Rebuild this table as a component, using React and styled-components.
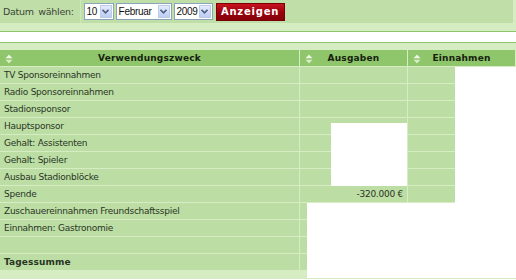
import React from 'react';
import styled, { createGlobalStyle } from 'styled-components';

const rows = [
  { label: 'TV Sponsoreinnahmen' },
  { label: 'Radio Sponsoreinnahmen' },
  { label: 'Stadionsponsor' },
  { label: 'Hauptsponsor' },
  { label: 'Gehalt: Assistenten' },
  { label: 'Gehalt: Spieler' },
  { label: 'Ausbau Stadionblöcke' },
  { label: 'Spende', out: '-320.000 €' },
  { label: 'Zuschauereinnahmen Freundschaftsspiel' },
  { label: 'Einnahmen: Gastronomie' },
  { label: '' },
  { label: 'Tagessumme', bold: true },
];

const blanks = [
  { left: 455, top: 17, width: 61, height: 211 },
  { left: 331, top: 73, width: 76, height: 63 },
  { left: 307, top: 153, width: 209, height: 75 },
];

function SortIcon() {
  return (
    <svg width="8" height="10" viewBox="0 0 8 10">
      <path d="M0.5 4.2 L4 0.6 L7.5 4.2 Z" fill="#eef7e6" />
      <path d="M0.5 5.8 L4 9.4 L7.5 5.8 Z" fill="#d8ecc8" />
    </svg>
  );
}

function Arrow() {
  return (
    <ArrowBox>
      <svg width="7" height="5" viewBox="0 0 7 5">
        <path d="M0.5 0.8 L3.5 3.8 L6.5 0.8" fill="none" stroke="#4d6185" strokeWidth="1.6" />
      </svg>
    </ArrowBox>
  );
}

function Select({ value, width }) {
  return (
    <SelectBox $width={width}>
      <SelectText>{value}</SelectText>
      <Arrow />
    </SelectBox>
  );
}

export default function App() {
  return (
    <Page>
      <GlobalStyle />
      <FilterBar>
        <Label>Datum wählen:</Label>
        <Controls>
          <Select value="10" width={30} />
          <Select value="Februar" width={56} />
          <Select value="2009" width={39} />
          <ShowButton>Anzeigen</ShowButton>
        </Controls>
      </FilterBar>
      <Band $h={8} />
      <WhiteStrip />
      <Band $h={7} />
      <TableWrap>
        <Table>
          <HeadCell>
            <SortIcon />
            <span>Verwendungszweck</span>
          </HeadCell>
          <HeadCell>
            <SortIcon />
            <span>Ausgaben</span>
          </HeadCell>
          <HeadCell>
            <SortIcon />
            <span>Einnahmen</span>
          </HeadCell>
          {rows.map((r, i) => (
            <React.Fragment key={i}>
              <Cell $bold={r.bold}>{r.label}</Cell>
              <Cell $right>{r.out || ''}</Cell>
              <Cell />
            </React.Fragment>
          ))}
        </Table>
        {blanks.map((b, i) => (
          <Blank key={i} $left={b.left} $top={b.top} $width={b.width} $height={b.height} />
        ))}
      </TableWrap>
    </Page>
  );
}

const GlobalStyle = createGlobalStyle`
  body {
    margin: 0;
    background: #fff;
    font-family: "DejaVu Sans", Verdana, sans-serif;
  }
`;

const Page = styled.div`
  width: 516px;
  background: #d6edc4;
`;

const FilterBar = styled.div`
  display: flex;
  align-items: center;
  width: 513px;
  height: 23px;
  background: #c0dfa8;
`;

const Label = styled.div`
  display: flex;
  align-items: center;
  height: 100%;
  padding: 0 6px 0 3px;
  border-right: 1px solid #d0e8bd;
  font-size: 9.5px;
  letter-spacing: -0.3px;
  word-spacing: 2px;
  color: #3d4438;
`;

const Controls = styled.div`
  display: flex;
  align-items: center;
  gap: 2px;
  margin-left: 3px;
`;

const SelectBox = styled.div`
  display: flex;
  align-items: stretch;
  box-sizing: border-box;
  width: ${(p) => p.$width}px;
  height: 17px;
  border: 1px solid #8aa4b8;
  background: #fff;
`;

const SelectText = styled.div`
  flex: 1;
  padding-left: 2px;
  font-family: "Liberation Sans", Arial, sans-serif;
  font-size: 10px;
  line-height: 15px;
  letter-spacing: -0.3px;
  color: #111;
  white-space: nowrap;
`;

const ArrowBox = styled.div`
  display: flex;
  align-items: center;
  justify-content: center;
  flex: none;
  width: 12px;
  margin: 1px;
  box-sizing: border-box;
  border: 1px solid #bccbea;
  background: linear-gradient(#e4ebfb, #bccdf2);
`;

const ShowButton = styled.div`
  display: flex;
  align-items: center;
  justify-content: center;
  box-sizing: border-box;
  width: 69px;
  height: 18px;
  margin-left: 1px;
  border: 1px solid #7a0008;
  background: linear-gradient(#c8141f, #98000c 55%, #86000a);
  color: #fff;
  font-size: 10px;
  font-weight: bold;
  letter-spacing: 0.8px;
`;

const Band = styled.div`
  height: ${(p) => p.$h}px;
  background: #d6edc4;
`;

const WhiteStrip = styled.div`
  height: 10px;
  background: #fff;
  border-top: 1px solid #8cc56c;
  border-bottom: 1px solid #8cc56c;
`;

const TableWrap = styled.div`
  position: relative;
  padding-bottom: 9px;
`;

const Table = styled.div`
  display: grid;
  grid-template-columns: 299px 107px 107px;
  grid-auto-rows: 16px;
  gap: 1px;
  background: #d6edc4;
`;

const HeadCell = styled.div`
  position: relative;
  display: flex;
  align-items: center;
  justify-content: center;
  background: #8fc66b;
  font-size: 9px;
  font-weight: bold;
  letter-spacing: 0.2px;
  color: #16220f;

  svg {
    position: absolute;
    left: 5px;
    top: 4px;
  }
`;

const Cell = styled.div`
  display: flex;
  align-items: center;
  justify-content: ${(p) => (p.$right ? 'flex-end' : 'flex-start')};
  padding: 0 4px;
  background: #bcdea4;
  font-size: 9px;
  font-weight: ${(p) => (p.$bold ? 'bold' : 'normal')};
  letter-spacing: ${(p) => (p.$bold ? '0.1px' : '-0.25px')};
  color: #2a3424;
  white-space: nowrap;
`;

const Blank = styled.div`
  position: absolute;
  left: ${(p) => p.$left}px;
  top: ${(p) => p.$top}px;
  width: ${(p) => p.$width}px;
  height: ${(p) => p.$height}px;
  background: #fff;
`;
